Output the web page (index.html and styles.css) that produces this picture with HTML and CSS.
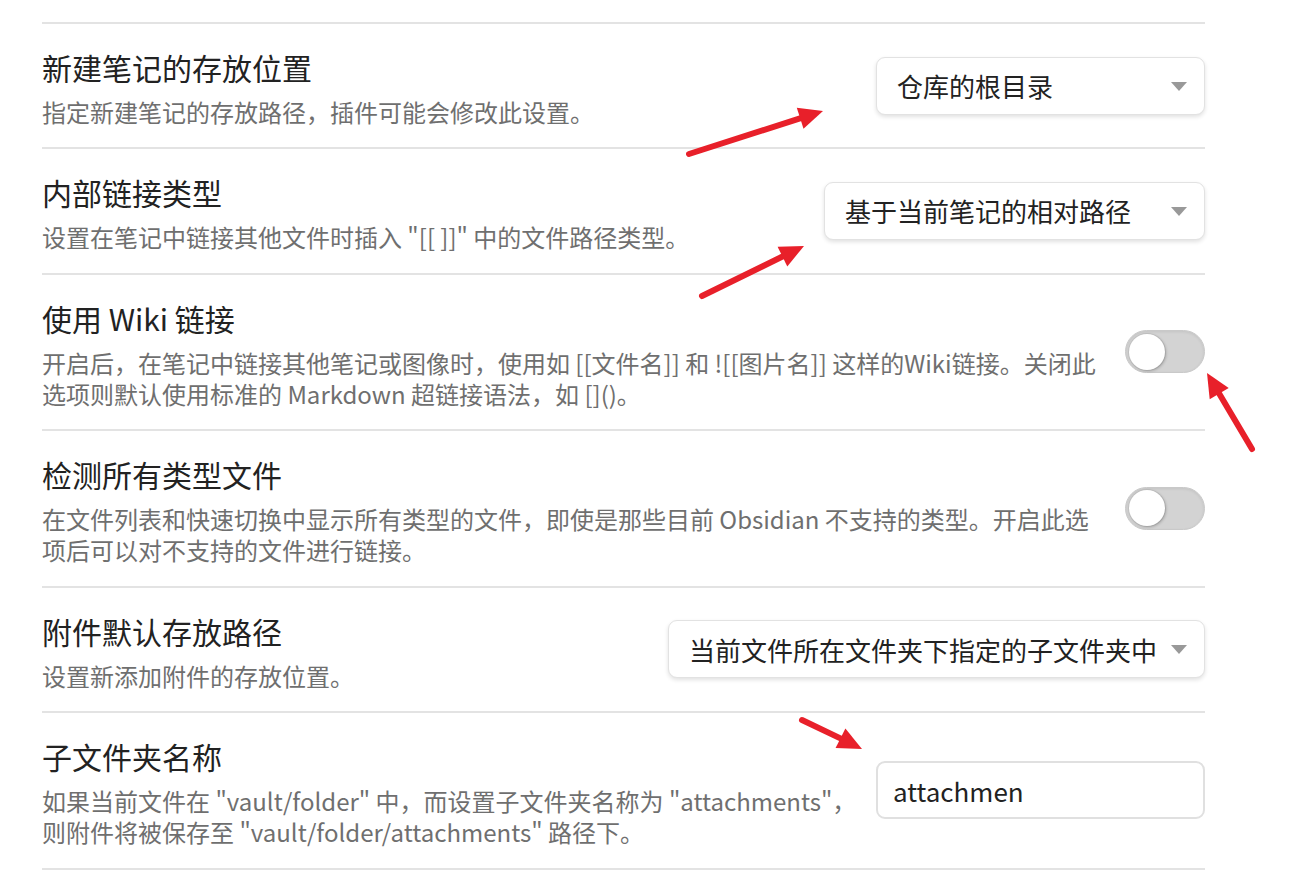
FILE: index.html
```html
<!DOCTYPE html>
<html lang="zh-CN">
<head>
<meta charset="utf-8">
<title>文件与链接设置</title>
<link rel="stylesheet" href="styles.css">
</head>
<body>
<div class="page">
  <div class="settings">
    <div class="setting-item">
      <div class="setting-info">
        <div class="setting-name">新建笔记的存放位置</div>
        <div class="setting-desc">指定新建笔记的存放路径，插件可能会修改此设置。</div>
      </div>
      <div class="dropdown dropdown-sm"><span>仓库的根目录</span></div>
    </div>

    <div class="setting-item">
      <div class="setting-info">
        <div class="setting-name">内部链接类型</div>
        <div class="setting-desc">设置在笔记中链接其他文件时插入 "[[ ]]" 中的文件路径类型。</div>
      </div>
      <div class="dropdown dropdown-md"><span>基于当前笔记的相对路径</span></div>
    </div>

    <div class="setting-item">
      <div class="setting-info">
        <div class="setting-name">使用 Wiki 链接</div>
        <div class="setting-desc">开启后，在笔记中链接其他笔记或图像时，使用如 [[文件名]] 和 ![[图片名]] 这样的Wiki链接。关闭此选项则默认使用标准的 Markdown 超链接语法，如 []()。</div>
      </div>
      <div class="toggle"><div class="toggle-knob"></div></div>
    </div>

    <div class="setting-item">
      <div class="setting-info">
        <div class="setting-name">检测所有类型文件</div>
        <div class="setting-desc">在文件列表和快速切换中显示所有类型的文件，即使是那些目前 Obsidian 不支持的类型。开启此选项后可以对不支持的文件进行链接。</div>
      </div>
      <div class="toggle"><div class="toggle-knob"></div></div>
    </div>

    <div class="setting-item">
      <div class="setting-info">
        <div class="setting-name">附件默认存放路径</div>
        <div class="setting-desc">设置新添加附件的存放位置。</div>
      </div>
      <div class="dropdown dropdown-lg"><span>当前文件所在文件夹下指定的子文件夹中</span></div>
    </div>

    <div class="setting-item">
      <div class="setting-info">
        <div class="setting-name">子文件夹名称</div>
        <div class="setting-desc">如果当前文件在 "vault/folder" 中，而设置子文件夹名称为 "attachments"，则附件将被保存至 "vault/folder/attachments" 路径下。</div>
      </div>
      <div class="text-input">attachmen</div>
    </div>
  </div>

  <svg class="annotations" width="1291" height="888" viewBox="0 0 1291 888" aria-hidden="true">
    <g stroke="#e8202a" stroke-width="6" stroke-linecap="round" fill="none">
      <line x1="689" y1="154" x2="803.9" y2="117.1"/>
      <line x1="702" y1="296" x2="786" y2="254.8"/>
      <line x1="1252" y1="449" x2="1217.2" y2="390.2"/>
      <line x1="802" y1="720" x2="844.1" y2="740.1"/>
    </g>
    <g fill="#e8202a">
      <polygon points="823,111 803.5,128.8 796.8,107.8"/>
      <polygon points="804,246 787.3,266.4 777.6,246.7"/>
      <polygon points="1207,373 1228.7,388.1 1209.7,399.3"/>
      <polygon points="862,749 835.6,748.1 845.4,728.5"/>
    </g>
  </svg>
</div>
</body>
</html>
```

FILE: styles.css
```css
html, body {
  margin: 0;
  padding: 0;
  background: #ffffff;
}

body {
  font-family: "Noto Sans CJK SC", "Noto Sans", sans-serif;
  color: #222222;
}

.page {
  position: relative;
  width: 1291px;
  height: 888px;
  overflow: hidden;
}

.settings {
  margin-left: 42px;
  width: 1163px;
  padding-top: 22px;
}

.setting-item {
  display: flex;
  align-items: center;
  padding: 20px 0;
  border-top: 2px solid #e3e3e3;
}

.setting-item:last-child {
  border-bottom: 2px solid #e3e3e3;
}

.setting-info {
  flex: 1 1 auto;
  min-width: 0;
}

.setting-name {
  font-size: 30px;
  line-height: 46px;
  color: #222222;
}

.setting-desc {
  margin-top: 6px;
  font-size: 24px;
  line-height: 31.3px;
  color: #6f6f6f;
}

.dropdown {
  flex: 0 0 auto;
  position: relative;
  box-sizing: border-box;
  height: 58px;
  margin-left: 24px;
  padding: 0 48px 0 20px;
  display: flex;
  align-items: center;
  border: 1px solid #e2e2e2;
  border-radius: 9px;
  background: #ffffff;
  box-shadow: 0 2px 4px rgba(0, 0, 0, 0.12);
  font-size: 26px;
  color: #222222;
  white-space: nowrap;
}

.dropdown::after {
  content: "";
  position: absolute;
  right: 17px;
  top: 50%;
  margin-top: -4px;
  border-left: 8.5px solid transparent;
  border-right: 8.5px solid transparent;
  border-top: 9px solid #999999;
}

.dropdown-sm { width: 329px; }
.dropdown-md { width: 381px; }
.dropdown-lg { width: 537px; }

.text-input {
  flex: 0 0 auto;
  box-sizing: border-box;
  width: 329px;
  height: 58px;
  margin-left: 4px;
  padding: 0 15px;
  display: flex;
  align-items: center;
  border: 2px solid #e0e0e0;
  border-radius: 9px;
  background: #ffffff;
  font-size: 26px;
  color: #222222;
}

.toggle {
  flex: 0 0 auto;
  position: relative;
  box-sizing: border-box;
  width: 80px;
  height: 43px;
  margin-left: 24px;
  border-radius: 22px;
  background: #d3d3d3;
  border: 1px solid #c9c9c9;
  box-shadow: inset 0 1px 3px rgba(0, 0, 0, 0.08);
}

.toggle-knob {
  position: absolute;
  left: 3px;
  top: 2.5px;
  width: 36px;
  height: 36px;
  border-radius: 50%;
  background: #ffffff;
  box-shadow: 0 0 0 1px rgba(0, 0, 0, 0.06), 1px 1px 3px rgba(0, 0, 0, 0.25);
}

.annotations {
  position: absolute;
  left: 0;
  top: 0;
  pointer-events: none;
}
```
